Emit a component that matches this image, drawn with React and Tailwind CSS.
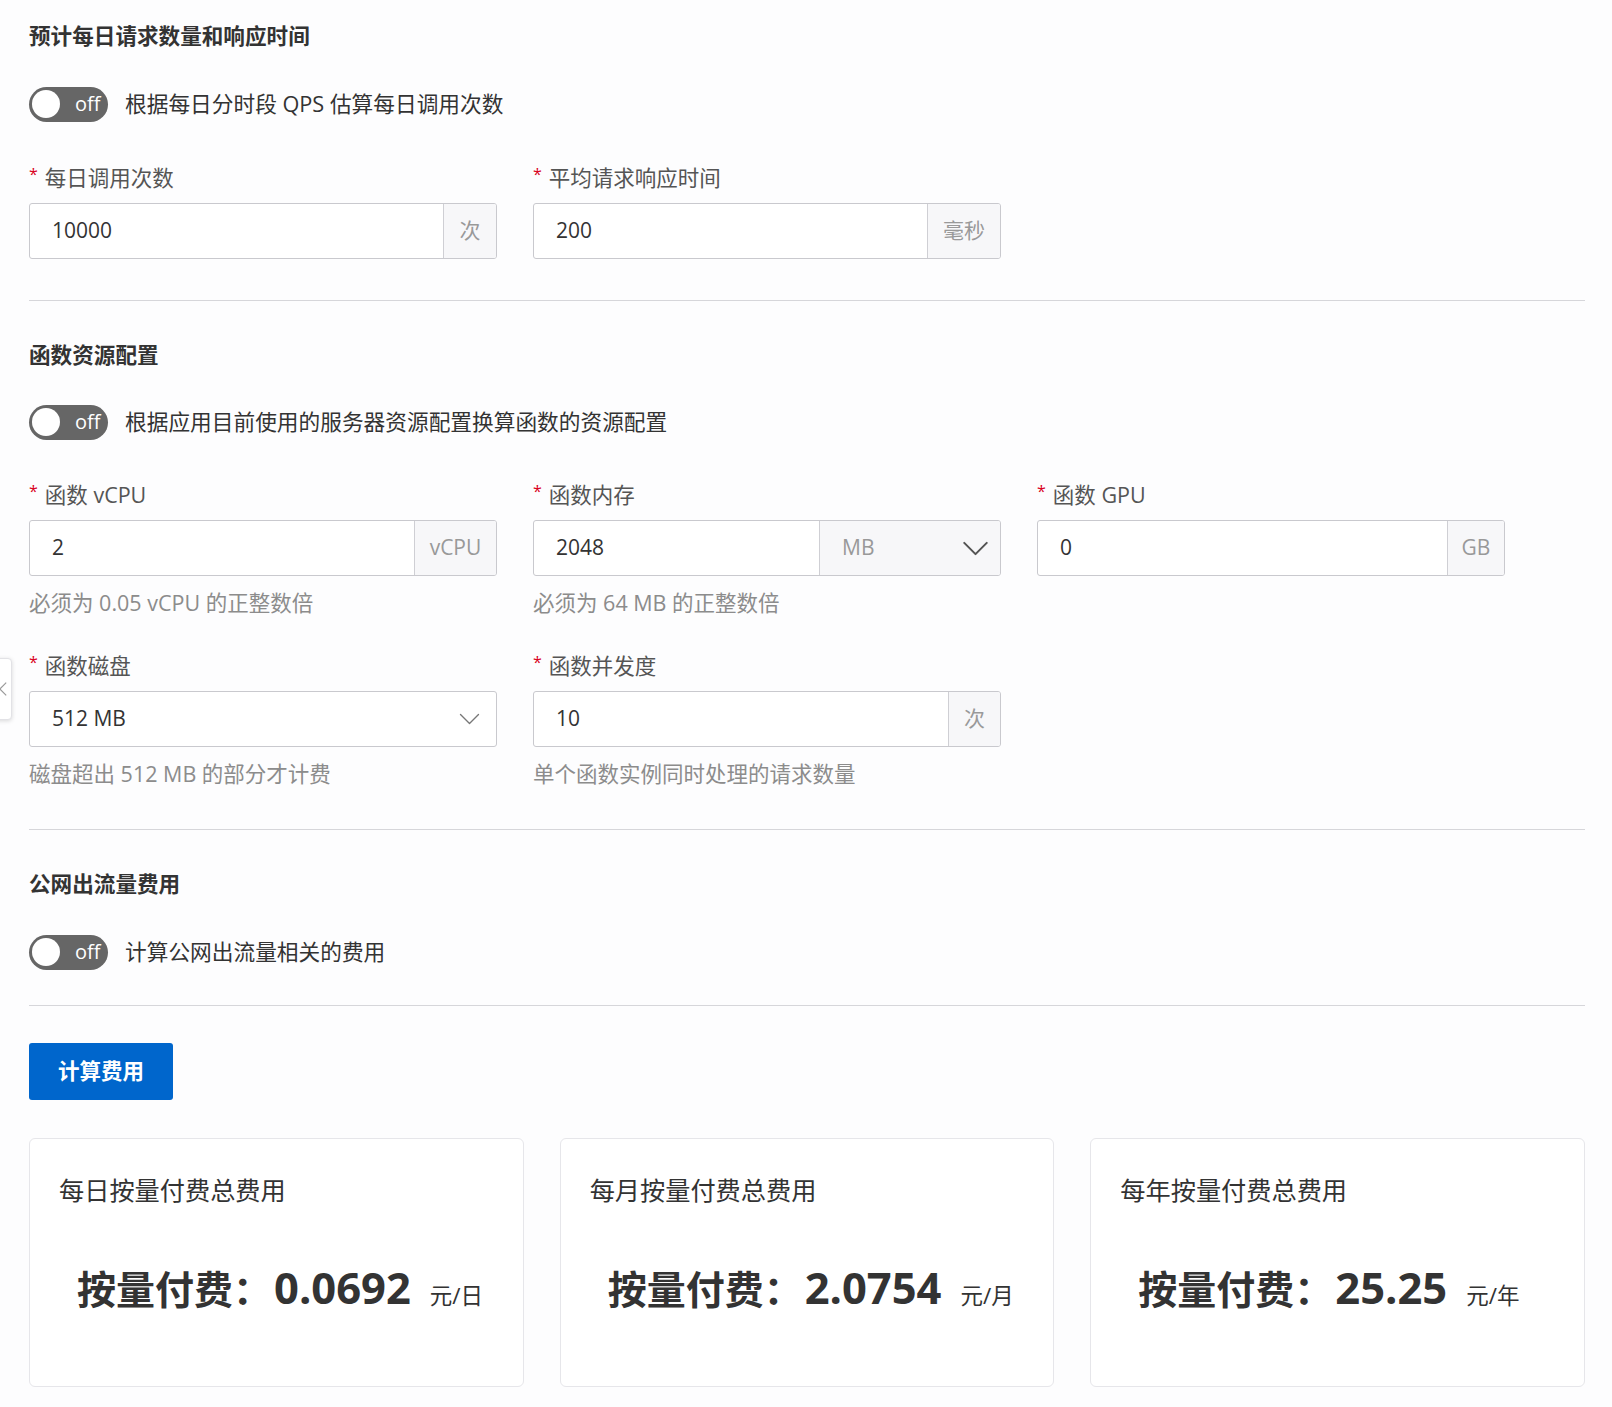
import React from 'react';

const Toggle = ({ label }) => (
  <div className="flex items-center h-[36px]">
    <div className="relative w-[79px] h-[35px] rounded-full bg-[#666666] flex items-center">
      <div className="absolute left-[3px] top-[3.5px] w-[28px] h-[28px] rounded-full bg-white" />
      <span className="ml-[46px] text-white text-[20px] leading-none">off</span>
    </div>
    <span className="ml-[17px] text-[21.7px] text-[#333]">{label}</span>
  </div>
);

const Label = ({ children }) => (
  <div className="h-[30px] leading-[30px] mb-[10px] text-[21.5px] text-[#555] flex items-center">
    <span className="text-[#d9001b] text-[16px] mr-[7px] -mt-[8px]">*</span>
    {children}
  </div>
);

const Help = ({ children }) => (
  <div className="mt-[12px] h-[30px] leading-[30px] text-[21.5px] text-[#8c8c8c]">{children}</div>
);

const Addon = ({ children, w }) => (
  <div className={`${w} h-full flex items-center justify-center bg-[#f7f7f9] border-l border-[#cfcfd4] text-[21px] text-[#999]`}>
    {children}
  </div>
);

const InputBox = ({ value, children }) => (
  <div className="h-[56px] flex border border-[#c9c9ce] rounded-[3px] bg-white overflow-hidden">
    <div className="flex-1 flex items-center pl-[22px] text-[21px] text-[#333]">{value}</div>
    {children}
  </div>
);

const Chevron = ({ className, sw }) => (
  <svg viewBox="0 0 28 16" className={className} fill="none" stroke="currentColor" strokeWidth={sw} strokeLinecap="round" strokeLinejoin="round">
    <path d="M2 2 L14 14 L26 2" />
  </svg>
);

const Title = ({ children, className }) => (
  <div className={`h-[30px] leading-[30px] text-[21.6px] font-bold text-[#333] ${className}`}>{children}</div>
);

const Card = ({ title, value, unit }) => (
  <div className="h-[249px] bg-white border border-[#e6e6ea] rounded-[6px] pt-[34px]">
    <div className="pl-[29px] h-[34px] leading-[34px] text-[25.2px] text-[#333]">{title}</div>
    <div className="mt-[56px] pl-[47px] flex items-baseline text-[#333] leading-[50px]">
      <span className="text-[39px] font-bold">按量付费：</span>
      <span className="ml-[2px] text-[43.5px] font-bold">{value}</span>
      <span className="ml-[19px] text-[22.5px]">{unit}</span>
    </div>
  </div>
);

export default function App() {
  return (
    <div className="relative min-h-[1407px] bg-[#fdfdfe] pl-[29px] pr-[27px] pt-[21px] font-['Open_Sans','Noto_Sans_CJK_SC',sans-serif]">
      {/* collapsed side tab */}
      <div className="absolute left-[-20px] top-[658px] w-[32px] h-[62px] bg-white border border-[#e2e2e6] rounded-[4px] shadow-[0_1px_4px_rgba(0,0,0,0.15)] flex items-center justify-end pr-[4px] text-[#999]">
        <svg viewBox="0 0 10 18" className="w-[8px] h-[16px]" fill="none" stroke="currentColor" strokeWidth="1.5">
          <path d="M9 1 L1 9 L9 17" />
        </svg>
      </div>

      {/* section 1 */}
      <Title>预计每日请求数量和响应时间</Title>
      <div className="mt-[35px]">
        <Toggle label="根据每日分时段 QPS 估算每日调用次数" />
      </div>
      <div className="mt-[41px] grid grid-cols-[468px_468px] gap-x-[36px]">
        <div>
          <Label>每日调用次数</Label>
          <InputBox value="10000">
            <Addon w="w-[53px]">次</Addon>
          </InputBox>
        </div>
        <div>
          <Label>平均请求响应时间</Label>
          <InputBox value="200">
            <Addon w="w-[73px]">毫秒</Addon>
          </InputBox>
        </div>
      </div>
      <div className="mt-[41px] h-px bg-[#d6d6da]" />

      {/* section 2 */}
      <Title className="mt-[39px]">函数资源配置</Title>
      <div className="mt-[34px]">
        <Toggle label="根据应用目前使用的服务器资源配置换算函数的资源配置" />
      </div>
      <div className="mt-[40px] grid grid-cols-[468px_468px_468px] gap-x-[36px]">
        <div>
          <Label>函数 vCPU</Label>
          <InputBox value="2">
            <Addon w="w-[82px]">vCPU</Addon>
          </InputBox>
          <Help>必须为 0.05 vCPU 的正整数倍</Help>
        </div>
        <div>
          <Label>函数内存</Label>
          <InputBox value="2048">
            <div className="w-[181px] h-full flex items-center justify-between pl-[22px] pr-[11px] bg-[#f7f7f9] border-l border-[#cfcfd4] text-[21px] text-[#999]">
              <span>MB</span>
              <Chevron className="w-[27px] h-[15px] text-[#555]" sw="2.2" />
            </div>
          </InputBox>
          <Help>必须为 64 MB 的正整数倍</Help>
        </div>
        <div>
          <Label>函数 GPU</Label>
          <InputBox value="0">
            <Addon w="w-[57px]">GB</Addon>
          </InputBox>
        </div>
      </div>
      <div className="mt-[33px] grid grid-cols-[468px_468px] gap-x-[36px]">
        <div>
          <Label>函数磁盘</Label>
          <div className="h-[56px] flex items-center justify-between border border-[#c9c9ce] rounded-[3px] bg-white pl-[22px] pr-[16px] text-[21px] text-[#333]">
            <span>512 MB</span>
            <Chevron className="w-[21px] h-[12px] text-[#777]" sw="1.8" />
          </div>
          <Help>磁盘超出 512 MB 的部分才计费</Help>
        </div>
        <div>
          <Label>函数并发度</Label>
          <InputBox value="10">
            <Addon w="w-[52px]">次</Addon>
          </InputBox>
          <Help>单个函数实例同时处理的请求数量</Help>
        </div>
      </div>
      <div className="mt-[40px] h-px bg-[#d6d6da]" />

      {/* section 3 */}
      <Title className="mt-[39px]">公网出流量费用</Title>
      <div className="mt-[35px]">
        <Toggle label="计算公网出流量相关的费用" />
      </div>
      <div className="mt-[35px] h-px bg-[#d6d6da]" />

      <button className="mt-[37px] w-[144px] h-[57px] rounded-[3px] bg-[#0066cc] text-white text-[21.5px] font-bold">
        计算费用
      </button>

      <div className="mt-[38px] grid grid-cols-3 gap-x-[36px]">
        <Card title="每日按量付费总费用" value="0.0692" unit="元/日" />
        <Card title="每月按量付费总费用" value="2.0754" unit="元/月" />
        <Card title="每年按量付费总费用" value="25.25" unit="元/年" />
      </div>
    </div>
  );
}
